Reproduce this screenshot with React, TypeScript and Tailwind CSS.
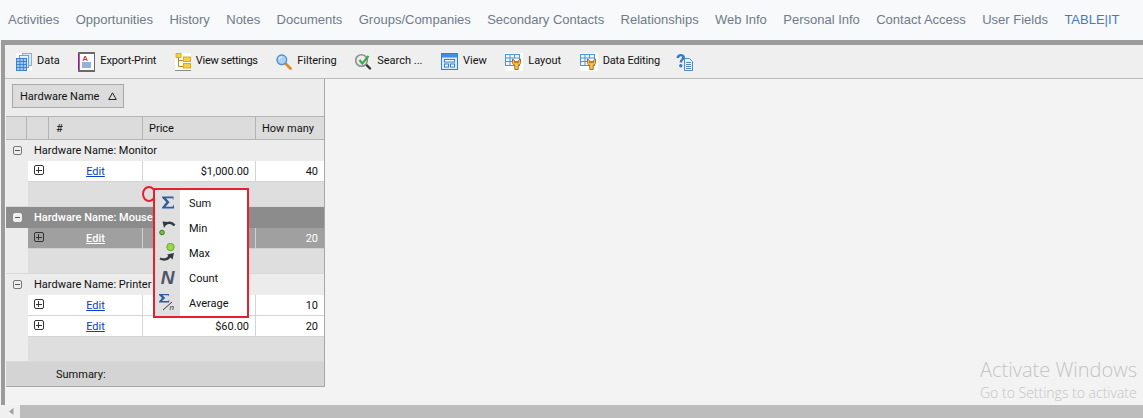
import React from 'react'

const NAV = [
  'Activities',
  'Opportunities',
  'History',
  'Notes',
  'Documents',
  'Groups/Companies',
  'Secondary Contacts',
  'Relationships',
  'Web Info',
  'Personal Info',
  'Contact Access',
  'User Fields',
]

const DataIcon = () => (
  <svg width="16" height="18" viewBox="0 0 16 18">
    <rect width="16" height="18" fill="#fff" />
    <rect x="6.500" y="0.500" width="9" height="12" fill="#dbe9fb" stroke="#7fb0ea" />
    <rect x="3.500" y="2.500" width="9" height="12" fill="#e6f0fc" stroke="#6aa2e4" />
    <rect x="0.500" y="5.500" width="10" height="12" fill="#a5caf3" stroke="#3c82d6" />
    <path d="M0.500 8.500h10M0.500 11.500h10M0.500 14.500h10M4 5.500v12M7.300 5.500v12" stroke="#3c82d6" />
  </svg>
)

const ExportIcon = () => (
  <svg width="17" height="20" viewBox="0 0 17 20">
    <rect x="0" y="0" width="17" height="20" fill="#6a6a6a" />
    <rect x="1.500" y="2" width="14.500" height="16" fill="#fff" />
    <path d="M0.800 2v16" stroke="#a0168c" strokeWidth="1.500" />
    <path d="M5 9l2.200-5 2.200 5M5.800 7.500h2.800" stroke="#d4282c" fill="none" />
    <path d="M4 11h9M4 13h9M4 15h9" stroke="#2b62b8" />
  </svg>
)

const TreeIcon = () => (
  <svg width="16" height="18" viewBox="0 0 16 18">
    <rect width="16" height="18" fill="#fff" />
    <path d="M3.500 4v9.500h5M3.500 7.500h5" stroke="#b98a2a" fill="none" />
    <rect x="1" y="0.500" width="5" height="4" fill="#f8cf3e" stroke="#e0a91e" />
    <rect x="8.500" y="4" width="7" height="4.500" fill="#f8cf3e" stroke="#e0a91e" />
    <rect x="8.500" y="10.500" width="7" height="4.500" fill="#f8cf3e" stroke="#e0a91e" />
    <path d="M0 17.500h16" stroke="#8a8a8a" />
  </svg>
)

const LensIcon = () => (
  <svg width="16" height="16" viewBox="0 0 16 16">
    <path d="M9.500 9.500l5 5" stroke="#e08a2c" strokeWidth="2.800" strokeLinecap="round" />
    <circle cx="5.800" cy="5.800" r="4.800" fill="#a9d2f5" stroke="#4f8fd0" strokeWidth="1.400" />
    <path d="M3 5c.6-1.400 1.600-2 3-2" stroke="#fff" fill="none" />
  </svg>
)

const SearchCheckIcon = () => (
  <svg width="17" height="17" viewBox="0 0 17 17">
    <path d="M10 10.500l5 5" stroke="#333" strokeWidth="2.400" strokeLinecap="round" />
    <circle cx="6.500" cy="7.500" r="5.800" fill="#ececec" stroke="#8f8f8f" strokeWidth="1.600" />
    <path d="M4.500 7l2.800 3.600L13.500 3" stroke="#3ba64a" strokeWidth="2.200" fill="none" />
  </svg>
)

const ViewIcon = () => (
  <svg width="17" height="17" viewBox="0 0 17 17">
    <rect width="17" height="17" fill="#fff" />
    <rect x="0.500" y="0.500" width="16" height="16" fill="#dceafa" stroke="#2f7fdc" />
    <rect x="1" y="1" width="15" height="3.500" fill="#3f8fe6" />
    <rect x="3.500" y="6.500" width="10" height="2.500" fill="#fff" stroke="#2f7fdc" />
    <rect x="3.500" y="11" width="4" height="3" fill="#fff" stroke="#2f7fdc" />
    <rect x="9.500" y="11" width="4" height="3" fill="#fff" stroke="#2f7fdc" />
  </svg>
)

const WrenchGridIcon = () => (
  <svg width="18" height="18" viewBox="0 0 18 18">
    <rect width="18" height="18" fill="#fff" />
    <rect x="0.500" y="1.500" width="14" height="11" fill="#f2f7fd" stroke="#4a94e6" />
    <path d="M0.500 5h14M0.500 8.500h14M5 1.500v11M9.500 1.500v3.500" stroke="#4a94e6" />
    <path
      d="M7.500 6v3.500c0 1.500 1 2.300 2.300 2.600v4.400h3.400v-4.400c1.300-.3 2.300-1.100 2.300-2.600V6l-2 1.500v2.200h-4V7.500z"
      fill="#fbc64a"
      stroke="#b86a12"
    />
  </svg>
)

const HelpIcon = () => (
  <svg width="18" height="18" viewBox="0 0 18 18">
    <path d="M9.500 5.500h5l3 3v9h-8z" fill="#eaf3fd" stroke="#4f88c4" />
    <path d="M11 9.500h5M11 11.500h5M11 13.500h5M11 15.500h5" stroke="#4f88c4" />
    <path
      d="M1.500 5C1.700 2.400 3.500 1 5.800 1 8.200 1 10 2.300 10 4.500 10 6.600 7.300 7 7 9.500H4.600C4.600 6.800 7 6.200 7 4.600 7 3.700 6.500 3.300 5.700 3.300 4.800 3.300 4.300 4 4.200 5z"
      fill="#2a7fd4"
    />
    <circle cx="5.800" cy="12.700" r="1.700" fill="#2a7fd4" />
  </svg>
)

const TOOLS: { label: string; icon: React.ReactNode; fit?: string }[] = [
  { label: 'Data', icon: <DataIcon /> },
  { label: 'Export-Print', icon: <ExportIcon />, fit: 'tracking-[-0.15px]' },
  { label: 'View settings', icon: <TreeIcon />, fit: 'tracking-[-0.3px]' },
  { label: 'Filtering', icon: <LensIcon /> },
  { label: 'Search ...', icon: <SearchCheckIcon /> },
  { label: 'View', icon: <ViewIcon /> },
  { label: 'Layout', icon: <WrenchGridIcon /> },
  { label: 'Data Editing', icon: <WrenchGridIcon />, fit: 'tracking-[-0.15px]' },
]

const PlusBox = () => (
  <span className="w-[10px] h-[10px] border border-[#333] rounded-[2px] flex items-center justify-center relative">
    <span className="w-[6px] h-px bg-[#333]" />
    <span className="absolute w-px h-[6px] bg-[#333]" />
  </span>
)

const MinusBox = ({ dark }: { dark?: boolean }) => (
  <span
    className={`w-[9px] h-[9px] border rounded-[2px] flex items-center justify-center ${
      dark ? 'border-[#eee] bg-[#eee]' : 'border-[#777] bg-[#eee]'
    }`}
  >
    <span className="w-[5px] h-px bg-[#555]" />
  </span>
)

const GroupRow = ({ name, dark }: { name: string; dark?: boolean }) => (
  <div className={`h-[21px] shrink-0 flex items-center ${dark ? 'bg-[#8c8c8c] text-white font-medium' : 'bg-[#ececec] text-[#111]'}`}>
    <div className="w-[22px] flex justify-center">
      <MinusBox dark={dark} />
    </div>
    <span className="ml-[6px] pt-[2px]">Hardware Name: {name}</span>
  </div>
)

const DataRow = ({ price, qty, dark }: { price?: string; qty: string; dark?: boolean }) => {
  const cell = dark ? 'border-[#d0d0d0]' : 'border-[#d4d4d4]'
  return (
    <div className="h-[21px] shrink-0 flex bg-[#ececec]">
      <div className="w-[22px]" />
      <div className={`flex-1 flex border-b ${cell} ${dark ? 'bg-[#a0a0a0] text-white' : 'bg-white text-[#111]'}`}>
        <div className="w-[21px] flex items-center justify-center pb-[2px]">
          <PlusBox />
        </div>
        <div className={`w-[94px] flex items-center justify-center border-r pt-[2px] ${cell}`}>
          <span className={`underline ${dark ? 'text-white font-medium' : 'text-[#0b3cc4]'}`}>Edit</span>
        </div>
        <div className={`w-[113px] flex items-center justify-end pr-[6px] border-r pt-[2px] ${cell}`}>{price}</div>
        <div className="flex-1 flex items-center justify-end pr-[6px] pt-[2px]">{qty}</div>
      </div>
    </div>
  )
}

const GroupFooter = () => (
  <div className="h-[25px] shrink-0 flex bg-[#ececec] border-b border-[#d8d8d8]">
    <div className="w-[22px]" />
    <div className="flex-1 bg-[#dedede]" />
  </div>
)

const MENU: { label: string; icon: React.ReactNode }[] = [
  {
    label: 'Sum',
    icon: (
      <svg width="14" height="13" viewBox="0 0 14 13">
        <path d="M1 0.500h11.500v3.500L11.500 2.300H5L8.500 6.300 4.500 10.800h7l1.500-2.300V12.500H1v-1l4.300-5.200L1 1.500z" fill="#2f5c9e" />
      </svg>
    ),
  },
  {
    label: 'Min',
    icon: (
      <svg width="17" height="17" viewBox="0 0 17 17">
        <path d="M15.500 6.500C13 3 9 3 6 5.500" stroke="#333a44" strokeWidth="2.400" fill="none" />
        <path d="M3.500 2.500l5.500 0.500-4 6z" fill="#333a44" />
        <circle cx="3" cy="13.500" r="2.300" fill="#7fc241" stroke="#2f7a2a" />
      </svg>
    ),
  },
  {
    label: 'Max',
    icon: (
      <svg width="17" height="19" viewBox="0 0 17 19">
        <circle cx="11.500" cy="4" r="3.700" fill="#9ad84a" stroke="#6aa82e" />
        <path d="M1 15.500c4.500 2 8.500 1 10-3.500" stroke="#333a44" strokeWidth="2.400" fill="none" />
        <path d="M8 11.500l7-1.500-1.500 6.500z" fill="#333a44" />
      </svg>
    ),
  },
  {
    label: 'Count',
    icon: (
      <span className="text-[19px] leading-none italic font-bold text-[#4f5468] [font-family:'Liberation_Sans',sans-serif]">N</span>
    ),
  },
  {
    label: 'Average',
    icon: (
      <svg width="17" height="17" viewBox="0 0 17 17">
        <path d="M0 0h10v2.500L9.300 1.300H3.500L6.200 4 3 7h6.300l.9-1.500V8.500H0v-1L3 4 0 1z" fill="#2f5c9e" />
        <path d="M4 16L13 8" stroke="#333" />
        <text x="10.500" y="16" fontSize="8" fontStyle="italic" fill="#333" fontFamily="Liberation Sans, sans-serif">n</text>
      </svg>
    ),
  },
]

export default function App() {
  return (
    <div className="w-[1143px] h-[418px] overflow-hidden relative flex flex-col bg-[#f3f3f3] text-[11px] [font-family:'Roboto',sans-serif]">
      <div className="h-[40px] shrink-0 bg-[#f8f9fa] flex items-center pl-[8px] gap-[16.4px] text-[13px] text-[#6f7b8b] [font-family:'Liberation_Sans',sans-serif]">
        {NAV.map((n) => (
          <span key={n}>{n}</span>
        ))}
        <span className="text-[#3f7cc4]">TABLE|IT</span>
      </div>
      <div className="flex-1 min-h-0 ml-px flex flex-col border-t-[5px] border-l-[4px] border-[#9b9b9b]">
        <div className="h-[34px] shrink-0 pl-[11px] flex items-center gap-[18.5px] bg-[#efefef] border-b border-[#bbbbbb] text-[#111]">
          {TOOLS.map((t) => (
            <div key={t.label} className="flex items-center gap-[5px]">
              {t.icon}
              <span className={t.fit}>{t.label}</span>
            </div>
          ))}
          <div className="-ml-[3px]">
            <HelpIcon />
          </div>
        </div>
        <div className="w-[319px] h-[308px] shrink-0 ml-px border-r border-b border-[#a8a8a8] flex flex-col bg-[#ececec] text-[#111]">
          <div className="h-[37px] shrink-0 pl-[6px] pt-[5px]">
            <div className="w-[112px] h-[24px] bg-[#dcdcdc] border border-[#a8a8a8] flex items-center pl-[7px] gap-[9px]">
              <span className="pt-[2px]">Hardware Name</span>
              <svg width="9" height="8" viewBox="0 0 9 8">
                <path d="M4.500 0.800L8.300 7.500H0.700z" fill="none" stroke="#222" />
              </svg>
            </div>
          </div>
          <div className="h-[24px] shrink-0 flex bg-[#dcdcdc] border-y border-[#b4b4b4]">
            <div className="w-[21px] border-r border-[#b4b4b4]" />
            <div className="w-[22px] border-r border-[#b4b4b4]" />
            <div className="w-[94px] border-r border-[#b4b4b4] pl-[7px] pt-[2px] flex items-center">#</div>
            <div className="w-[113px] border-r border-[#b4b4b4] pl-[6px] pt-[2px] flex items-center">Price</div>
            <div className="flex-1 pl-[6px] pt-[2px] flex items-center">How many</div>
          </div>
          <GroupRow name="Monitor" />
          <DataRow price="$1,000.00" qty="40" />
          <GroupFooter />
          <GroupRow name="Mouse" dark />
          <DataRow qty="20" dark />
          <GroupFooter />
          <GroupRow name="Printer" />
          <DataRow qty="10" />
          <DataRow price="$60.00" qty="20" />
          <GroupFooter />
          <div className="flex-1 bg-[#d4d4d4] flex items-center pl-[50px] pt-[2px]">Summary:</div>
        </div>
      </div>
      <div className="h-[13px] shrink-0 flex">
        <div className="w-[20px] flex items-center justify-center pl-[2px] bg-[#f0f0f0]">
          <svg width="5" height="7" viewBox="0 0 5 7">
            <path d="M4.500 0v7L0 3.500z" fill="#a0a0a0" />
          </svg>
        </div>
        <div className="flex-1 bg-[#bdbdbd]" />
      </div>

      {/* marker and menu lying over the grid */}
      <div className="absolute left-[142px] top-[186px] w-[14px] h-[16px] rounded-[50%] border-2 border-[#e8202e]" />
      <div className="absolute left-[153px] top-[188px] w-[96px] h-[130px] bg-white border-2 border-[#e8202e] flex flex-col text-[#111]">
        <div className="absolute left-0 top-0 bottom-0 w-[25px] bg-[#e0e0e0]" />
        {MENU.map((m) => (
          <div key={m.label} className="h-[25px] flex items-center relative first:mt-[2px]">
            <div className="w-[25px] flex items-center justify-center">{m.icon}</div>
            <span className="ml-[9px] pt-[4px]">{m.label}</span>
          </div>
        ))}
      </div>

      <div className="absolute left-[980px] top-[357px] w-[163px] overflow-hidden whitespace-nowrap text-[#c4c4c4] [font-family:'Open_Sans',sans-serif]">
        <div className="text-[20px] leading-[26px] font-light">Activate Windows</div>
        <div className="text-[14px] leading-[20px] font-light">Go to Settings to activate</div>
      </div>
    </div>
  )
}
